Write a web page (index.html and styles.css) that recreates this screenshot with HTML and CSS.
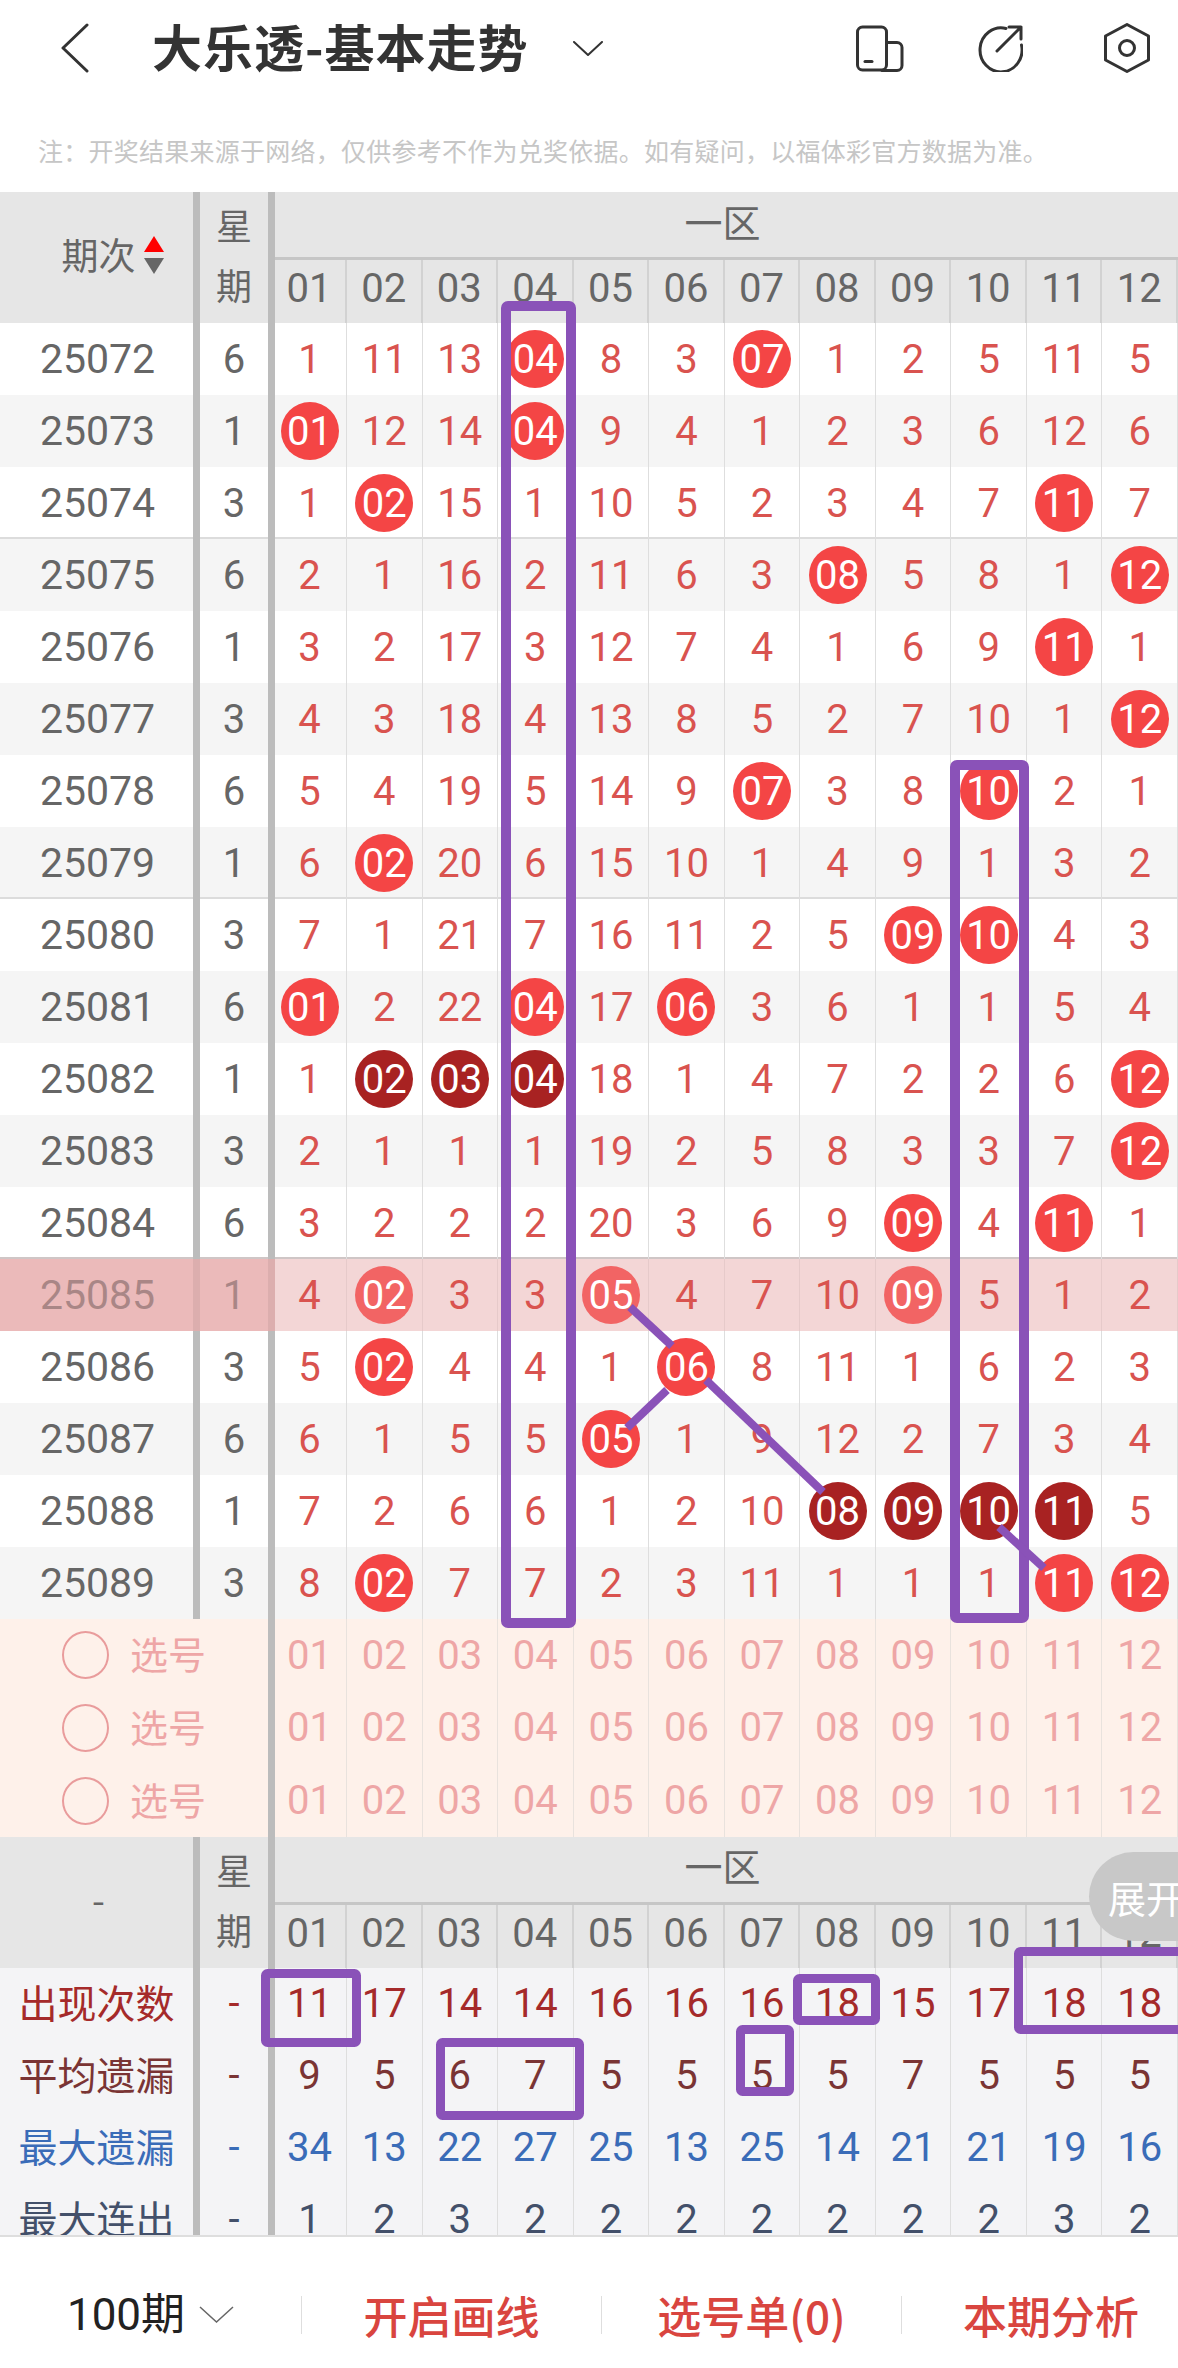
FILE: index.html
```html
<!DOCTYPE html>
<html lang="zh-CN">
<head>
<meta charset="utf-8">
<title>大乐透-基本走势</title>
<link rel="stylesheet" href="styles.css">
</head>
<body>
<div class="page">
  <header class="top">
    <svg class="ic-back" viewBox="0 0 28 50"><polyline points="26,2 2,25 26,48"/></svg>
    <h1 class="title">大乐透-基本走势</h1>
    <svg class="ic-drop" viewBox="0 0 30 15"><polyline points="1,1 15,14 29,1"/></svg>
    <svg class="ic ic-phone" viewBox="0 0 48 46"><rect x="1.5" y="1.5" width="29" height="43" rx="5"/><path d="M31 17h10a5 5 0 0 1 5 5v18a5 5 0 0 1-5 5H26"/><path d="M9 36h7"/></svg>
    <svg class="ic ic-share" viewBox="0 0 46 47"><path d="M29 3.500A21 22 0 1 0 44.500 20"/><path d="M20 26 44 2M32 2h12v12"/></svg>
    <svg class="ic ic-hex" viewBox="0 0 46 50"><polygon points="23,1.500 44.500,13 44.500,37 23,48.500 1.500,37 1.500,13"/><circle cx="23" cy="25" r="7.500"/></svg>
  </header>
  <p class="note">注&#65306;开奖结果来源于网络&#65292;仅供参考不作为兑奖依据。如有疑问&#65292;以福体彩官方数据为准。</p>

  <main class="table">
    <div class="head">
      <div class="h-period">期次<span class="sort"><i class="up"></i><i class="down"></i></span></div>
      <div class="h-week"><span>星</span><span>期</span></div>
      <div class="h-zone">一区</div>
      <div class="h-n">01</div><div class="h-n">02</div><div class="h-n">03</div><div class="h-n">04</div><div class="h-n">05</div><div class="h-n">06</div><div class="h-n">07</div><div class="h-n">08</div><div class="h-n">09</div><div class="h-n">10</div><div class="h-n">11</div><div class="h-n">12</div>
    </div>

    <div class="row"><div class="p">25072</div><div class="w">6</div><div class="c">1</div><div class="c">11</div><div class="c">13</div><div class="c"><b class="ball">04</b></div><div class="c">8</div><div class="c">3</div><div class="c"><b class="ball">07</b></div><div class="c">1</div><div class="c">2</div><div class="c">5</div><div class="c">11</div><div class="c">5</div></div>
    <div class="row alt"><div class="p">25073</div><div class="w">1</div><div class="c"><b class="ball">01</b></div><div class="c">12</div><div class="c">14</div><div class="c"><b class="ball">04</b></div><div class="c">9</div><div class="c">4</div><div class="c">1</div><div class="c">2</div><div class="c">3</div><div class="c">6</div><div class="c">12</div><div class="c">6</div></div>
    <div class="row"><div class="p">25074</div><div class="w">3</div><div class="c">1</div><div class="c"><b class="ball">02</b></div><div class="c">15</div><div class="c">1</div><div class="c">10</div><div class="c">5</div><div class="c">2</div><div class="c">3</div><div class="c">4</div><div class="c">7</div><div class="c"><b class="ball">11</b></div><div class="c">7</div></div>
    <div class="row alt sep"><div class="p">25075</div><div class="w">6</div><div class="c">2</div><div class="c">1</div><div class="c">16</div><div class="c">2</div><div class="c">11</div><div class="c">6</div><div class="c">3</div><div class="c"><b class="ball">08</b></div><div class="c">5</div><div class="c">8</div><div class="c">1</div><div class="c"><b class="ball">12</b></div></div>
    <div class="row"><div class="p">25076</div><div class="w">1</div><div class="c">3</div><div class="c">2</div><div class="c">17</div><div class="c">3</div><div class="c">12</div><div class="c">7</div><div class="c">4</div><div class="c">1</div><div class="c">6</div><div class="c">9</div><div class="c"><b class="ball">11</b></div><div class="c">1</div></div>
    <div class="row alt"><div class="p">25077</div><div class="w">3</div><div class="c">4</div><div class="c">3</div><div class="c">18</div><div class="c">4</div><div class="c">13</div><div class="c">8</div><div class="c">5</div><div class="c">2</div><div class="c">7</div><div class="c">10</div><div class="c">1</div><div class="c"><b class="ball">12</b></div></div>
    <div class="row"><div class="p">25078</div><div class="w">6</div><div class="c">5</div><div class="c">4</div><div class="c">19</div><div class="c">5</div><div class="c">14</div><div class="c">9</div><div class="c"><b class="ball">07</b></div><div class="c">3</div><div class="c">8</div><div class="c"><b class="ball">10</b></div><div class="c">2</div><div class="c">1</div></div>
    <div class="row alt"><div class="p">25079</div><div class="w">1</div><div class="c">6</div><div class="c"><b class="ball">02</b></div><div class="c">20</div><div class="c">6</div><div class="c">15</div><div class="c">10</div><div class="c">1</div><div class="c">4</div><div class="c">9</div><div class="c">1</div><div class="c">3</div><div class="c">2</div></div>
    <div class="row sep"><div class="p">25080</div><div class="w">3</div><div class="c">7</div><div class="c">1</div><div class="c">21</div><div class="c">7</div><div class="c">16</div><div class="c">11</div><div class="c">2</div><div class="c">5</div><div class="c"><b class="ball">09</b></div><div class="c"><b class="ball">10</b></div><div class="c">4</div><div class="c">3</div></div>
    <div class="row alt"><div class="p">25081</div><div class="w">6</div><div class="c"><b class="ball">01</b></div><div class="c">2</div><div class="c">22</div><div class="c"><b class="ball">04</b></div><div class="c">17</div><div class="c"><b class="ball">06</b></div><div class="c">3</div><div class="c">6</div><div class="c">1</div><div class="c">1</div><div class="c">5</div><div class="c">4</div></div>
    <div class="row"><div class="p">25082</div><div class="w">1</div><div class="c">1</div><div class="c"><b class="ball dark">02</b></div><div class="c"><b class="ball dark">03</b></div><div class="c"><b class="ball dark">04</b></div><div class="c">18</div><div class="c">1</div><div class="c">4</div><div class="c">7</div><div class="c">2</div><div class="c">2</div><div class="c">6</div><div class="c"><b class="ball">12</b></div></div>
    <div class="row alt"><div class="p">25083</div><div class="w">3</div><div class="c">2</div><div class="c">1</div><div class="c">1</div><div class="c">1</div><div class="c">19</div><div class="c">2</div><div class="c">5</div><div class="c">8</div><div class="c">3</div><div class="c">3</div><div class="c">7</div><div class="c"><b class="ball">12</b></div></div>
    <div class="row"><div class="p">25084</div><div class="w">6</div><div class="c">3</div><div class="c">2</div><div class="c">2</div><div class="c">2</div><div class="c">20</div><div class="c">3</div><div class="c">6</div><div class="c">9</div><div class="c"><b class="ball">09</b></div><div class="c">4</div><div class="c"><b class="ball">11</b></div><div class="c">1</div></div>
    <div class="row hl sep"><div class="p">25085</div><div class="w">1</div><div class="c">4</div><div class="c"><b class="ball">02</b></div><div class="c">3</div><div class="c">3</div><div class="c"><b class="ball">05</b></div><div class="c">4</div><div class="c">7</div><div class="c">10</div><div class="c"><b class="ball">09</b></div><div class="c">5</div><div class="c">1</div><div class="c">2</div></div>
    <div class="row"><div class="p">25086</div><div class="w">3</div><div class="c">5</div><div class="c"><b class="ball">02</b></div><div class="c">4</div><div class="c">4</div><div class="c">1</div><div class="c"><b class="ball">06</b></div><div class="c">8</div><div class="c">11</div><div class="c">1</div><div class="c">6</div><div class="c">2</div><div class="c">3</div></div>
    <div class="row alt"><div class="p">25087</div><div class="w">6</div><div class="c">6</div><div class="c">1</div><div class="c">5</div><div class="c">5</div><div class="c"><b class="ball">05</b></div><div class="c">1</div><div class="c">9</div><div class="c">12</div><div class="c">2</div><div class="c">7</div><div class="c">3</div><div class="c">4</div></div>
    <div class="row"><div class="p">25088</div><div class="w">1</div><div class="c">7</div><div class="c">2</div><div class="c">6</div><div class="c">6</div><div class="c">1</div><div class="c">2</div><div class="c">10</div><div class="c"><b class="ball dark">08</b></div><div class="c"><b class="ball dark">09</b></div><div class="c"><b class="ball dark">10</b></div><div class="c"><b class="ball dark">11</b></div><div class="c">5</div></div>
    <div class="row alt"><div class="p">25089</div><div class="w">3</div><div class="c">8</div><div class="c"><b class="ball">02</b></div><div class="c">7</div><div class="c">7</div><div class="c">2</div><div class="c">3</div><div class="c">11</div><div class="c">1</div><div class="c">1</div><div class="c">1</div><div class="c"><b class="ball">11</b></div><div class="c"><b class="ball">12</b></div></div>

    <div class="row pick"><div class="pk"><i class="radio"></i><span>选号</span></div><div class="c">01</div><div class="c">02</div><div class="c">03</div><div class="c">04</div><div class="c">05</div><div class="c">06</div><div class="c">07</div><div class="c">08</div><div class="c">09</div><div class="c">10</div><div class="c">11</div><div class="c">12</div></div>
    <div class="row pick"><div class="pk"><i class="radio"></i><span>选号</span></div><div class="c">01</div><div class="c">02</div><div class="c">03</div><div class="c">04</div><div class="c">05</div><div class="c">06</div><div class="c">07</div><div class="c">08</div><div class="c">09</div><div class="c">10</div><div class="c">11</div><div class="c">12</div></div>
    <div class="row pick"><div class="pk"><i class="radio"></i><span>选号</span></div><div class="c">01</div><div class="c">02</div><div class="c">03</div><div class="c">04</div><div class="c">05</div><div class="c">06</div><div class="c">07</div><div class="c">08</div><div class="c">09</div><div class="c">10</div><div class="c">11</div><div class="c">12</div></div>

    <div class="head">
      <div class="h-period h-dash">-</div>
      <div class="h-week"><span>星</span><span>期</span></div>
      <div class="h-zone">一区</div>
      <div class="h-n">01</div><div class="h-n">02</div><div class="h-n">03</div><div class="h-n">04</div><div class="h-n">05</div><div class="h-n">06</div><div class="h-n">07</div><div class="h-n">08</div><div class="h-n">09</div><div class="h-n">10</div><div class="h-n">11</div><div class="h-n">12</div>
    </div>

    <div class="row stat s1"><div class="p">出现次数</div><div class="w">-</div><div class="c">11</div><div class="c">17</div><div class="c">14</div><div class="c">14</div><div class="c">16</div><div class="c">16</div><div class="c">16</div><div class="c">18</div><div class="c">15</div><div class="c">17</div><div class="c">18</div><div class="c">18</div></div>
    <div class="row stat s2"><div class="p">平均遗漏</div><div class="w">-</div><div class="c">9</div><div class="c">5</div><div class="c">6</div><div class="c">7</div><div class="c">5</div><div class="c">5</div><div class="c">5</div><div class="c">5</div><div class="c">7</div><div class="c">5</div><div class="c">5</div><div class="c">5</div></div>
    <div class="row stat s3"><div class="p">最大遗漏</div><div class="w">-</div><div class="c">34</div><div class="c">13</div><div class="c">22</div><div class="c">27</div><div class="c">25</div><div class="c">13</div><div class="c">25</div><div class="c">14</div><div class="c">21</div><div class="c">21</div><div class="c">19</div><div class="c">16</div></div>
    <div class="row stat s4"><div class="p">最大连出</div><div class="w">-</div><div class="c">1</div><div class="c">2</div><div class="c">3</div><div class="c">2</div><div class="c">2</div><div class="c">2</div><div class="c">2</div><div class="c">2</div><div class="c">2</div><div class="c">2</div><div class="c">3</div><div class="c">2</div></div>
  </main>

  <footer class="foot">
    <div class="f-item f-period">100期<svg class="ic-fdrop" viewBox="0 0 35 17"><polyline points="1,1 17.500,16 34,1"/></svg></div>
    <div class="f-item f-act">开启画线</div>
    <div class="f-item f-act">选号单(0)</div>
    <div class="f-item f-act f-last">本期分析</div>
  </footer>

  <svg class="marks" viewBox="0 0 1178 2368">
    <rect class="mk" x="506" y="306" width="65" height="1317" rx="2"/>
    <rect class="mk" x="955" y="765" width="69" height="853" rx="2"/>
    <line class="mk" x1="630" y1="1307" x2="672" y2="1346"/>
    <line class="mk" x1="706" y1="1380" x2="823" y2="1492"/>
    <line class="mk" x1="627" y1="1428" x2="667" y2="1390"/>
    <line class="mk" x1="999" y1="1527" x2="1044" y2="1568"/>
    <rect class="mk thin" x="265.500" y="1973.500" width="91" height="69" rx="2"/>
    <rect class="mk thin" x="797.500" y="1978.500" width="78" height="42" rx="2"/>
    <rect class="mk thin" x="1018.500" y="1951.500" width="170" height="78" rx="2"/>
    <rect class="mk thin" x="440.500" y="2042.500" width="139" height="73" rx="2"/>
    <rect class="mk thin" x="740.500" y="2029.500" width="49" height="62" rx="2"/>
  </svg>
  <div class="pill">展开</div>
</div>
</body>
</html>
```
FILE: styles.css
```css
* { box-sizing: border-box; }
html, body { margin: 0; padding: 0; background: #fff; }
body { font-family: Roboto, "Noto Sans CJK SC", sans-serif; }
.page { position: relative; width: 1178px; height: 2368px; overflow: hidden; background: #fff; }

/* top bar */
.top { display: flex; align-items: center; height: 96px; padding-right: 28px; }
.top svg { fill: none; stroke: #333; stroke-width: 3; stroke-linecap: round; stroke-linejoin: round; flex: none; }
.ic-back { width: 28px; height: 50px; margin-left: 61px; }
.title { margin: 0 0 6px 63px; font: 700 50px/1 "Noto Sans CJK SC", sans-serif; letter-spacing: 1px; color: #333; white-space: nowrap; }
.ic-drop { width: 30px; height: 15px; margin-left: 44px; stroke-width: 2 !important; }
.ic { height: 47px; }
.ic-phone { width: 48px; margin-left: auto; }
.ic-share { width: 46px; margin-left: 73px; }
.ic-hex { width: 46px; height: 50px; margin-left: 81px; }
.note { margin: 0; height: 96px; padding: 41px 0 0 38px; font: 400 25px/26px "Noto Sans CJK SC", sans-serif; letter-spacing: .25px; color: #c6c6c6; white-space: nowrap; }

/* table */
.table { height: 2043px; overflow: hidden; }
.head, .row { display: grid; grid-template-columns: 200px 75px 72px repeat(11, 1fr); }
.head { grid-template-rows: 68px 63px; height: 131px; background: #e6e6e6; color: #666; }
.h-period { grid-row: 1 / 3; display: flex; align-items: center; justify-content: center; gap: 8px; padding: 0 0 6px 32px; border-right: 7px solid #bcbcbc; font: 400 37px/1 "Noto Sans CJK SC", sans-serif; }
.h-period.h-dash { padding: 0 0 8px 4px; }
.sort { display: flex; flex-direction: column; gap: 6px; }
.sort i { display: block; width: 0; height: 0; border-left: 10px solid transparent; border-right: 10px solid transparent; }
.sort .up { border-bottom: 16px solid #f00; }
.sort .down { border-top: 16px solid #666; }
.h-week { grid-row: 1 / 3; display: flex; flex-direction: column; align-items: center; justify-content: center; padding-bottom: 7px; border-right: 7px solid #bcbcbc; font: 400 36px/60px "Noto Sans CJK SC", sans-serif; }
.h-zone { grid-column: 3 / -1; display: flex; align-items: center; justify-content: center; padding: 0 8px 8px 0; border-bottom: 3px solid #c6c6c6; font: 400 38px/1 "Noto Sans CJK SC", sans-serif; }
.h-n { display: flex; align-items: center; justify-content: center; padding-bottom: 6px; border-right: 2px solid #d2d2d2; font-size: 40px; }
.h-n:nth-child(4) { padding-right: 2px; }

.row { height: 72px; background: #fff; color: #d9534f; font-size: 40px; }
.row.alt { background: #f5f5f5; }
.row.sep { box-shadow: 0 -2px 0 #dcdcdc; }
.p, .w { display: flex; align-items: center; justify-content: center; color: #666; border-right: 7px solid #bcbcbc; }
.p { padding-left: 2px; font-size: 41px; }
.c { display: flex; align-items: center; justify-content: center; border-right: 1px solid #dedede; }
.c:nth-child(3) { padding-right: 2px; }
.ball { display: flex; align-items: center; justify-content: center; width: 58px; height: 58px; border-radius: 50%; background: #f44545; color: #fff; font-weight: 400; flex: none; }
.ball.dark { background: #a82222; }

.row.hl { background: #f3d6d6; box-shadow: 0 -2px 0 #cfc6c6; }
.hl .p, .hl .w { background: #ebbaba; color: #a98686; border-right-color: #dcaeae; }
.hl .c { border-right-color: #e6caca; }
.hl .ball { background: #f26464; }

.row.pick { height: 72.67px; background: #fef1ea; color: #eea6a6; }
.pk { grid-column: 1 / 3; display: flex; align-items: center; padding-left: 62px; gap: 21px; border-right: 7px solid #bcbcbc; font: 400 38px/1 "Noto Sans CJK SC", sans-serif; }
.pk span { padding-bottom: 4px; }
.radio { display: block; width: 47px; height: 48px; border: 2px solid #e99c9c; border-radius: 50%; flex: none; }
.pick .c { border-right-color: #e9e2dd; }
.pick .c:nth-child(3) { padding-right: 0; }
.pick .c:nth-child(2) { padding-right: 2px; }

.row.stat { background: #f4f4f6; }
.stat .p { padding: 0 0 4px; font: 400 39px/1 "Noto Sans CJK SC", sans-serif; white-space: nowrap; }
.s1, .s1 .p, .s1 .w { color: #a52a2a; }
.s2, .s2 .p, .s2 .w { color: #7a3434; }
.s3, .s3 .p, .s3 .w { color: #3a6cb8; }
.s4, .s4 .p, .s4 .w { color: #43506a; }

/* footer */
.foot { display: flex; align-items: center; height: 133px; padding-top: 24px; border-top: 2px solid #dedede; background: #fff; }
.f-item { display: flex; align-items: center; justify-content: center; width: 300px; height: 38px; flex: none; white-space: nowrap; }
.f-item + .f-item { border-left: 1px solid #dedede; }
.f-period { width: 301px; gap: 14px; font: 400 44px/1 Roboto, "Noto Sans CJK SC", sans-serif; color: #222; }
.ic-fdrop { width: 35px; height: 17px; fill: none; stroke: #666; stroke-width: 1.5; flex: none; }
.f-act { font: 500 44px/1 "Noto Sans CJK SC", sans-serif; color: #d9453f; }
.f-last { width: 277px; padding-left: 22px; }

/* annotations */
.marks { position: absolute; left: 0; top: 0; width: 1178px; height: 2368px; pointer-events: none; }
.mk { fill: none; stroke: #8a52b8; stroke-width: 10; }
line.mk { stroke-width: 8; }
.mk.thin { stroke-width: 9; }
.pill { position: absolute; left: 1089px; top: 1852px; width: 100px; height: 89px; padding-left: 19px; border-radius: 45px 0 0 45px; background: #c8c8c8; color: #fff; font: 400 38px/89px "Noto Sans CJK SC", sans-serif; white-space: nowrap; overflow: hidden; }
```
